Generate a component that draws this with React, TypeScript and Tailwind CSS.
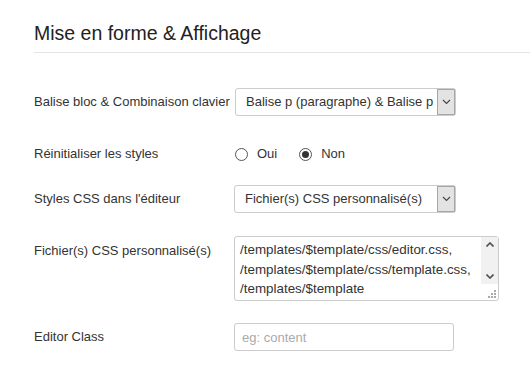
import { useState } from 'react'

function Chevron() {
	return (
		<svg width="9" height="6" viewBox="0 0 9 6" fill="none">
			<path d="M1 1l3.5 3.5L8 1" stroke="#444" strokeWidth="1.1" />
		</svg>
	)
}

function FakeSelect({ value, width }: { value: string; width: string }) {
	return (
		<div className={`flex h-[28px] ${width} items-stretch rounded-[3px] border border-[#ccc] bg-white`}>
			<div className="flex-1 overflow-hidden whitespace-nowrap pl-[10px] pr-1 leading-[26px] text-[#333]">{value}</div>
			<div className="flex w-[18px] items-center justify-center border border-[#a6a6a6] bg-[#e3e3e3]">
				<Chevron />
			</div>
		</div>
	)
}

function Radio({ checked, label, onClick }: { checked: boolean; label: string; onClick: () => void }) {
	return (
		<label className="flex cursor-pointer items-center gap-[9px]" onClick={onClick}>
			<span className="flex h-[13px] w-[13px] items-center justify-center rounded-full border border-[#555] bg-white">
				{checked && <span className="h-[7px] w-[7px] rounded-full bg-[#333]" />}
			</span>
			<span>{label}</span>
		</label>
	)
}

export default function App() {
	const [reset, setReset] = useState(false)

	return (
		<div className="min-h-[376px] bg-white pl-[34px] font-['Liberation_Sans',Arial,sans-serif] text-[13px] text-[#333]">
			<h2 className="pt-[21px] text-[19.5px] leading-[24px] text-[#222]">Mise en forme &amp; Affichage</h2>
			<div className="mt-[7px] border-b border-[#e3e3e3]" />

			<div className="mt-[35px] flex items-center">
				<div className="w-[201px]">Balise bloc &amp; Combinaison clavier</div>
				<FakeSelect value="Balise p (paragraphe) & Balise p" width="w-[221px]" />
			</div>

			<div className="mt-[28px] flex h-[20px] items-center">
				<div className="w-[201px]">Réinitialiser les styles</div>
				<div className="flex items-center gap-[22px]">
					<Radio checked={reset} label="Oui" onClick={() => setReset(true)} />
					<Radio checked={!reset} label="Non" onClick={() => setReset(false)} />
				</div>
			</div>

			<div className="mt-[21px] flex items-center">
				<div className="w-[200px]">Styles CSS dans l'éditeur</div>
				<FakeSelect value="Fichier(s) CSS personnalisé(s)" width="w-[222px]" />
			</div>

			<div className="mt-[23px] flex items-start">
				<div className="w-[200px] pt-[5px]">Fichier(s) CSS personnalisé(s)</div>
				<div className="flex h-[65px] w-[265px] rounded-[3px] border border-[#ccc] bg-white">
					<div className="flex-1 overflow-hidden pl-[5px] pt-[3px] text-[13.4px] leading-[19.5px] whitespace-nowrap">
						<div>/templates/$template/css/editor.css,</div>
						<div>/templates/$template/css/template.css,</div>
						<div>/templates/$template</div>
					</div>
					<div className="flex w-[17px] flex-col">
						<div className="flex h-[47px] flex-col items-center justify-between bg-[#f1f1f1] py-[5px]">
							<svg width="8" height="5" viewBox="0 0 8 5"><path d="M0.5 4.5L4 1l3.5 3.5" stroke="#505050" strokeWidth="1.6" fill="none" /></svg>
							<svg width="8" height="5" viewBox="0 0 8 5"><path d="M0.5 0.5L4 4l3.5-3.5" stroke="#505050" strokeWidth="1.6" fill="none" /></svg>
						</div>
						<div className="flex flex-1 items-end justify-end pb-[2px] pr-[2px]">
							<svg width="8" height="8" viewBox="0 0 8 8" fill="#aaa">
								<rect x="6" y="0" width="2" height="2" />
								<rect x="3" y="3" width="2" height="2" />
								<rect x="6" y="3" width="2" height="2" />
								<rect x="0" y="6" width="2" height="2" />
								<rect x="3" y="6" width="2" height="2" />
								<rect x="6" y="6" width="2" height="2" />
							</svg>
						</div>
					</div>
				</div>
			</div>

			<div className="mt-[22px] flex items-center">
				<div className="w-[200px]">Editor Class</div>
				<input
					type="text"
					placeholder="eg: content"
					className="h-[28px] w-[220px] rounded-[3px] border border-[#ccc] px-[7px] text-[13px] text-[#333] placeholder:text-[#aaa] outline-none"
				/>
			</div>
		</div>
	)
}
